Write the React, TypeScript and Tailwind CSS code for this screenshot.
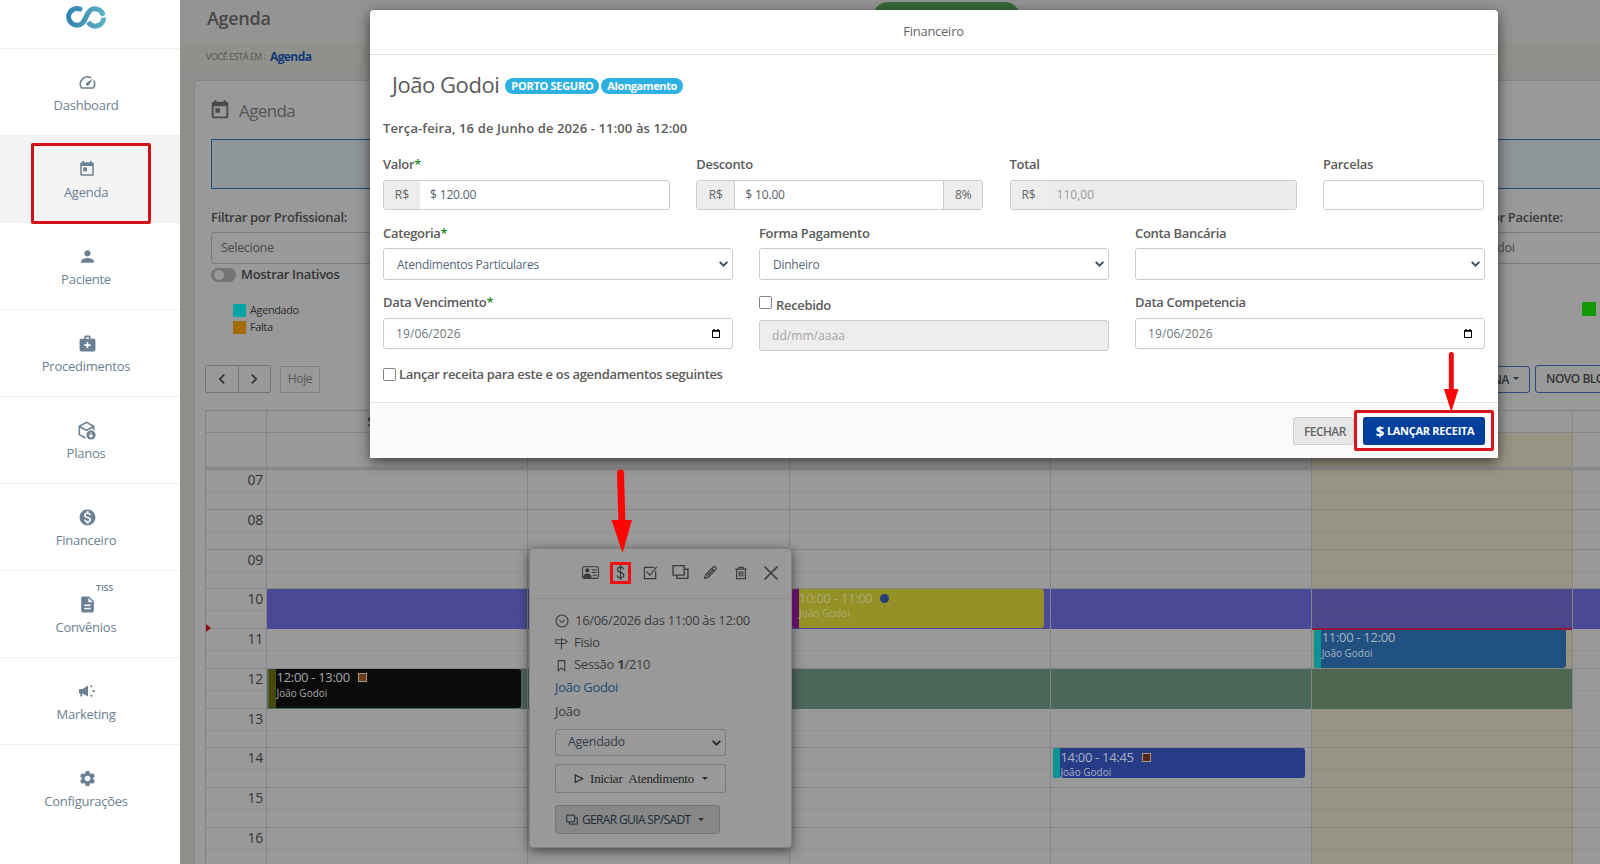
import type { ReactNode } from "react";
import {
  MdSpeed,
  MdToday,
  MdPerson,
  MdMedicalServices,
  MdMonetizationOn,
  MdDescription,
  MdSettings,
} from "react-icons/md";
import { BsPersonVcard } from "react-icons/bs";

function Logo() {
  return (
    <svg width="42" height="24" viewBox="0 0 42 24" fill="none" className="block">
      <defs>
        <linearGradient id="logo" x1="0" y1="0" x2="42" y2="0" gradientUnits="userSpaceOnUse">
          <stop offset="0" stopColor="#2f7fae" />
          <stop offset="1" stopColor="#5fb4c6" />
        </linearGradient>
      </defs>
      <g stroke="url(#logo)" strokeWidth="5">
        <path
          d="M15 4.100A8.300 8.300 0 1 0 17.300 18.200C20.500 15.500 21.500 9 25 5.600A8.300 8.300 0 0 1 37.600 8.600"
          strokeLinecap="round"
        />
        <path d="M38.700 12.600A8.400 8.400 0 0 1 23.200 17.200" />
      </g>
    </svg>
  );
}

function BoxDownIcon() {
  return (
    <svg width="18" height="19" viewBox="0 0 18 19" fill="none" stroke="currentColor" strokeWidth="1.6">
      <path d="M7.500 17 1.300 13.600V5.300L8.500 1.300l7.200 4v4M1.500 5.500l7 3.900 7-3.900" />
      <circle cx="13" cy="14" r="4.600" fill="currentColor" stroke="none" />
      <path d="M13 11.400v4.600M11 14.200l2 2 2-2" stroke="#fff" strokeWidth="1.100" />
    </svg>
  );
}

function MegaphoneIcon() {
  return (
    <svg width="18" height="14" viewBox="0 0 18 14" fill="currentColor">
      <path d="M1 5h3.500L10 1.500v11L4.500 9.500H4.200v3H2.400v-3H1z" />
      <path d="M12 2.500l1.400-1.600 1.200 1L13.200 3.600zM14 6.200h3v1.500h-3zM12 11.500l1.200-1.100 1.400 1.700-1.200 1z" />
    </svg>
  );
}

function LineIcon({ children, size = 15 }: { children: ReactNode; size?: number }) {
  return (
    <svg width={size} height={size} viewBox="0 0 16 16" fill="none" stroke="currentColor" strokeWidth="1.300" className="shrink-0">
      {children}
    </svg>
  );
}

const layersPath = <path d="M1 1.500h10.500v9H1zM4.500 10.500v3H15V5h-3.500" />;

const menu = [
  { label: "Dashboard", icon: <MdSpeed size={19} /> },
  { label: "Agenda", icon: <MdToday size={18} />, active: true },
  { label: "Paciente", icon: <MdPerson size={19} /> },
  { label: "Procedimentos", icon: <MdMedicalServices size={19} /> },
  { label: "Planos", icon: <BoxDownIcon /> },
  { label: "Financeiro", icon: <MdMonetizationOn size={19} /> },
  { label: "Convênios", icon: <MdDescription size={19} />, tag: "TISS" },
  { label: "Marketing", icon: <MegaphoneIcon /> },
  { label: "Configurações", icon: <MdSettings size={19} /> },
];

function Sidebar() {
  return (
    <aside className="w-[180px] shrink-0 bg-white text-[#6b8193]">
      <div className="h-[48px] pt-[5px] pl-[65px]">
        <Logo />
      </div>
      {menu.map((item) => (
        <div
          key={item.label}
          className={
            "relative flex h-[87px] flex-col items-center border-t border-[#f1f1f1] pr-[8px] pt-[23px] " +
            (item.active ? "bg-[#f4f4f4]" : "")
          }
        >
          <div className="flex h-5 items-center pl-[2px]">{item.icon}</div>
          <span className="mt-[3px] text-[13px] leading-[20px] tracking-[-0.250px]">{item.label}</span>
          {item.tag && (
            <span className="absolute left-[96px] top-[9px] text-[9px] font-semibold leading-[16px] tracking-[-0.200px]">
              {item.tag}
            </span>
          )}
          {item.active && (
            <div className="absolute left-[31px] top-[7px] z-10 h-[81px] w-[120px] rounded-[2px] border-[3px] border-[#d01217]" />
          )}
        </div>
      ))}
    </aside>
  );
}

type CalEvent = {
  title: string;
  box: string;
  bar: string;
  text: string;
  mark?: string;
};

const events: Record<string, CalEvent> = {
  "10-2": {
    title: "10:00 - 11:00",
    box: "h-[39px] bg-[#949226]",
    bar: "bg-[#5f1263]",
    text: "text-[#aeab7c]",
    mark: "size-[9px] rounded-full bg-[#263f78]",
  },
  "11-4": { title: "11:00 - 12:00", box: "h-[39px] bg-[#205181]", bar: "bg-[#0b9493]", text: "text-[#a9b4bf]" },
  "12-0": {
    title: "12:00 - 13:00",
    box: "h-[39px] bg-[#0b0b0b]",
    bar: "bg-[#48480a]",
    text: "text-[#a8a8a8]",
    mark: "size-[9px] border border-[#a89884] bg-[#6b3a14]",
  },
  "14-3": {
    title: "14:00 - 14:45",
    box: "h-[30px] bg-[#273c86]",
    bar: "bg-[#0b9493]",
    text: "text-[#aab0c0]",
    mark: "size-[9px] border border-[#a89884] bg-[#552712]",
  },
};

const hours = ["07", "08", "09", "10", "11", "12", "13", "14", "15", "16"];
const days = ["Seg 15/06", "Ter 16/06", "Qua 17/06", "Qui 18/06", "Sex 19/06", "Sáb 20/06"];

function EventCard({ event }: { event: CalEvent }) {
  return (
    <div className={"absolute left-[2px] top-0 z-10 flex w-[252px] overflow-hidden rounded-[3px] " + event.box}>
      <div className={"w-[7px] shrink-0 " + event.bar} />
      <div className={"pl-[0.500px] " + event.text}>
        <div className="flex h-[18px] items-center text-[13px] tracking-[-0.300px]">
          {event.title}
          {event.mark && <span className={"ml-[8px] " + event.mark} />}
        </div>
        <div className="text-[10px] leading-[13px]">João Godoi</div>
      </div>
    </div>
  );
}

function cellColor(hour: string, day: number) {
  if (hour === "10") return day === 4 ? "bg-[#4c478b]" : "bg-[#4b4a97]";
  if (hour === "12" && day < 5) return day === 4 ? "bg-[#4d6750]" : "bg-[#4d675b]";
  return day === 4 ? "bg-[#979484]" : "";
}

function Calendar() {
  return (
    <div className="mt-[17px] w-[1631px] border-l border-t border-[#828282]">
      <div className="flex h-[22px] border-b border-[#858585] text-[13px] font-semibold text-[#333]">
        <div className="w-[61px] shrink-0 border-r border-[#858585]" />
        {days.map((d) => (
          <div key={d} className="w-[261.300px] shrink-0 border-r border-[#858585] text-center leading-[21px]">
            {d}
          </div>
        ))}
      </div>
      <div className="flex h-[34px]">
        <div className="w-[61px] shrink-0 border-r border-[#858585]" />
        {days.map((d, i) => (
          <div
            key={d}
            className={"w-[261.300px] shrink-0 border-r border-[#858585] " + (i === 4 ? "bg-[#979484]" : "")}
          />
        ))}
      </div>
      <div className="h-[3px] border-y border-[#828282] bg-[#8e8e8e]" />
      {hours.map((h) => (
        <div key={h} className="flex h-[39.750px]">
          <div className="w-[61px] shrink-0 border-b border-r border-[#858585]">
            <div className="h-[22px] border-b border-[#8f8f8f] pr-[3px] text-right text-[14px] leading-[20px] tracking-[-0.200px] text-[#333]">
              {h}
            </div>
          </div>
          {days.map((d, i) => (
            <div
              key={d}
              className={
                "relative w-[261.300px] shrink-0 border-r border-[#858585] " +
                cellColor(h, i) +
                (h === "10" || h === "12" ? "" : " border-b")
              }
            >
              <div className="h-[22px] border-b border-black/5" />
              {h === "11" && i === 4 && <div className="absolute inset-x-0 -top-px z-20 h-[1.500px] bg-[#8e1a3a]" />}
              {events[`${h}-${i}`] && <EventCard event={events[`${h}-${i}`]} />}
            </div>
          ))}
        </div>
      ))}
    </div>
  );
}

function AgendaPage() {
  return (
    <main className="relative h-full min-w-0 flex-1 overflow-hidden bg-[#8f8f8c]">
      <header className="flex h-[44px] items-start bg-[#949494] pl-[27px] pt-[5px] text-[18px] font-semibold leading-[26px] tracking-[-0.300px] text-[#474747]">
        Agenda
      </header>
      <div className="flex h-[25px] items-center bg-[#91918b] pl-[26px]">
        <span className="w-[64px] text-[9px] tracking-[-0.450px] text-[#555]">VOCÊ ESTÁ EM :</span>
        <span className="text-[12px] font-bold tracking-[-0.600px] text-[#0e3a78]">Agenda</span>
      </div>
      <div className="h-[11px] bg-[#8e8e8f]" />
      <div className="ml-[14px] h-[784px] w-[1660px] rounded-tl-[4px] border-l border-t border-[#858585] bg-[#999]">
        <div className="flex h-[58px] items-center pl-[14px] text-[#4a4a4a]">
          <MdToday size={22} />
          <span className="ml-[8px] mt-[2px] text-[17px] tracking-[-0.600px] text-[#555]">Agenda</span>
        </div>
        <div className="ml-[16px] h-[50px] border border-[#24477f] bg-[#8e9598]" />
        <div className="ml-[16px] flex pt-[18px] text-[13px] tracking-[-0.300px] text-[#3a3a3a]">
          <div className="w-[1234px]">
            <div className="font-semibold leading-[20px]">Filtrar por Profissional:</div>
            <div className="mt-[5px] h-[32px] w-[1190px] rounded-[3px] border border-[#7b7b7b] pl-[9px] text-[12.500px] leading-[30px] text-[#4a4a4a]">
              Selecione
            </div>
          </div>
          <div className="w-[300px]">
            <div className="font-semibold leading-[20px]">Filtrar por Paciente:</div>
            <div className="mt-[5px] h-[32px] rounded-[3px] border border-[#7b7b7b] pl-[8px] text-[12.500px] leading-[30px] text-[#4a4a4a]">
              João Godoi
            </div>
          </div>
        </div>
        <div className="ml-[16px] mt-[3px] flex h-[15px] items-center">
          <span className="flex h-[14px] w-[25px] items-center rounded-full bg-[#747474] pl-[3px]">
            <span className="size-[10px] rounded-full bg-[#999]" />
          </span>
          <span className="ml-[5px] text-[13px] font-semibold tracking-[-0.300px] text-[#333]">Mostrar Inativos</span>
        </div>
        <div className="ml-[38px] mt-[20px] flex h-[63px] text-[11px] font-medium tracking-[-0.400px] text-[#2c2c2c]">
          <div className="w-[1349px]">
            <div className="flex h-[17px] items-center">
              <span className="mr-[4px] size-[13px] bg-[#06a5a5]" />
              Agendado
            </div>
            <div className="flex h-[17px] items-center">
              <span className="mr-[4px] size-[13px] bg-[#a36c0a]" />
              Falta
            </div>
          </div>
          <div className="size-[14px] bg-[#129a06]" />
        </div>
        <div className="ml-[10px] flex h-[28px] text-[#333]">
          <div className="flex w-[66px] rounded-[2px] border border-[#747474]">
            <div className="flex flex-1 items-center justify-center border-r border-[#747474]">
              <LineIcon size={14}>
                <path d="M10.500 3 5.500 8l5 5" strokeWidth="2" />
              </LineIcon>
            </div>
            <div className="flex flex-1 items-center justify-center">
              <LineIcon size={14}>
                <path d="M5.500 3l5 5-5 5" strokeWidth="2" />
              </LineIcon>
            </div>
          </div>
          <div className="ml-[9px] mt-px h-[27px] w-[40px] border border-[#808080] text-center text-[12px] leading-[24px] tracking-[-0.300px] text-[#555]">
            Hoje
          </div>
          <div className="ml-[1130px] mt-px flex h-[27px] w-[80px] items-center justify-end rounded-[3px] border border-[#2d4a7c] pr-[10px] text-[12px] font-semibold tracking-[-0.400px]">
            SEMANA
            <span className="mb-[2px] ml-[4px] border-x-[3px] border-t-[3px] border-x-transparent border-t-[#333]" />
          </div>
          <div className="ml-[5px] flex h-[28px] w-[140px] items-center rounded-[3px] border border-[#2d4a7c] pl-[10px] text-[12px] font-semibold tracking-[-0.500px] whitespace-nowrap">
            NOVO BLOQUEIO
          </div>
        </div>
        <div className="pl-[10px]">
          <Calendar />
        </div>
      </div>
      {/* current time marker */}
      <div className="absolute left-[26px] top-[624px] border-y-[4px] border-l-[5px] border-y-transparent border-l-[#8c0a14]" />
      <div className="absolute left-[693px] top-[2px] h-[30px] w-[147px] rounded-full bg-[#356b38]" />
    </main>
  );
}

function Caret() {
  return <span className="border-x-[3px] border-t-[3px] border-x-transparent border-t-[#2b2b2b]" />;
}

function Chevron({ className }: { className: string }) {
  return (
    <svg width="9" height="6" viewBox="0 0 9 6" fill="none" stroke="currentColor" strokeWidth="2" className={className}>
      <path d="M.7.900 4.500 4.600 8.300.9" />
    </svg>
  );
}

function EventPopover() {
  return (
    <div className="absolute left-[529px] top-[548px] h-[300px] w-[263px] rounded-[4px] border border-[#808080] bg-[#999] text-[#3c3c3c] shadow-[0_3px_12px_rgba(0,0,0,0.55)]">
      <div className="flex h-[50px] items-center justify-end border-b border-[#8e8e8e] pr-[12px] pb-[2px]">
        <BsPersonVcard size={17} />
        <div className="ml-[11px] flex h-[22px] w-[21px] items-center justify-center border-[3px] border-[#f20d12]">
          <LineIcon size={15}>
            <path d="M11.500 4.500C11 3 10 2.300 8 2.300S4.800 3.300 4.800 5c0 4 6.700 1.800 6.700 6 0 1.700-1.600 2.700-3.500 2.700S4.500 12.800 4.500 11M8 0v16" />
          </LineIcon>
        </div>
        <div className="ml-[12px] flex items-center">
          <LineIcon>
            <path d="M13.500 6.500V14.500H1.500V2.500H12M4 7l3.500 4L14.500 2" />
          </LineIcon>
        </div>
        <div className="ml-[14px] flex items-center">
          <LineIcon size={17}>{layersPath}</LineIcon>
        </div>
        <div className="ml-[14px] flex items-center">
          <LineIcon>
            <path d="M1.500 14.500 3 10.300 10.800 2.200c1.800-1.600 4.300.9 2.700 2.700L5.600 13zM9.300 3.700l2.800 2.800M4.500 11.500 10.500 5.500" />
          </LineIcon>
        </div>
        <div className="ml-[16px] flex items-center">
          <LineIcon size={14}>
            <path d="M1.500 3.500h13M3 3.500v11h10v-11M5.500 3.500v-2h5v2M6 6v6M8 6v6M10 6v6" />
          </LineIcon>
        </div>
        <div className="ml-[15px] flex items-center">
          <LineIcon size={16}>
            <path d="m1.500 1.500 13 13M14.500 1.500l-13 13" strokeWidth="1.600" />
          </LineIcon>
        </div>
      </div>
      <div className="pl-[25px] pt-[11px] text-[13px] tracking-[-0.300px]">
        <div className="flex h-[22px] items-center">
          <LineIcon size={14}>
            <circle cx="8" cy="8" r="6.800" />
            <path d="m4.800 6.800 3.200 3 3.200-3" />
          </LineIcon>
          <span className="ml-[6px]">16/06/2026 das 11:00 às 12:00</span>
        </div>
        <div className="flex h-[22px] items-center">
          <LineIcon size={13}>
            <path d="M8 1v14M1 3.500h11.500L15 5.700 12.500 8H1z" />
          </LineIcon>
          <span className="ml-[6px]">Fisio</span>
        </div>
        <div className="flex h-[22px] items-center">
          <LineIcon size={13}>
            <path d="M4 2h8v12.500l-4-3.500-4 3.500z" />
          </LineIcon>
          <span className="ml-[6px]">
            Sessão <b>1</b>/210
          </span>
        </div>
        <div className="leading-[22px] text-[#234b70]">João Godoi</div>
        <div className="mt-[2px] leading-[22px]">João</div>
        <div className="mt-[7px] flex h-[27px] w-[171px] items-center justify-between rounded-[3px] border border-[#7b7b7b] pl-[12px] pr-[4px] text-[12.500px] text-[#34404a]">
          Agendado
          <Chevron className="text-[#2b2b2b]" />
        </div>
        <div className="mt-[8px] flex h-[29px] w-[171px] items-center rounded-[3px] border border-[#7b7b7b] pl-[18px] font-['Liberation_Serif',serif] text-[#222]">
          <LineIcon size={10}>
            <path d="M2 1.500 14 7.500 2 13.500z" strokeWidth="1.700" />
          </LineIcon>
          <span className="ml-[6px] mr-[8px] text-[13px] tracking-[-0.200px] [word-spacing:3.500px]">Iniciar Atendimento</span>
          <Caret />
        </div>
        <div className="mt-[12px] flex h-[29px] w-[165px] items-center rounded-[3px] border border-[#767676] bg-[#878787] pl-[10px] text-[12px] font-medium text-[#222c33]">
          <LineIcon size={12}>{layersPath}</LineIcon>
          <span className="ml-[4px] mr-[8px] whitespace-nowrap tracking-[-0.650px]">GERAR GUIA SP/SADT</span>
          <Caret />
        </div>
      </div>
    </div>
  );
}

function Label({ children, required }: { children: ReactNode; required?: boolean }) {
  return (
    <div className="h-[20px] text-[13px] font-semibold leading-[20px] tracking-[-0.320px] text-[#5a5a5a]">
      {children}
      {required && <span className="text-[#1d8a1d]">*</span>}
    </div>
  );
}

function MoneyInput({ value, suffix, disabled }: { value: string; suffix?: string; disabled?: boolean }) {
  return (
    <div className="mt-[6px] flex h-[30px] overflow-hidden rounded-[3px] border border-[#ccc] text-[12px] leading-[28px]">
      <div className={"shrink-0 bg-[#ededed] text-center text-[#666] " + (suffix ? "w-[38px] border-r border-[#ccc]" : "w-[36px]")}>
        R$
      </div>
      <div
        className={
          "flex-1 " +
          (suffix ? "pl-[10px] " : "pl-[10px] ") +
          (disabled ? "bg-[#ececec] text-[#9a9a9a]" : "tracking-[-0.150px] text-[#55606b]")
        }
      >
        {value}
      </div>
      {suffix && <div className="w-[39px] border-l border-[#ccc] bg-[#ededed] text-center text-[#666]">{suffix}</div>}
    </div>
  );
}

function SelectBox({ value }: { value?: string }) {
  return (
    <div className="mt-[5px] flex h-[32px] items-center justify-between rounded-[3px] border border-[#ccc] pl-[13px] pr-[4px] text-[12px] tracking-[-0.250px] text-[#55677a]">
      <span className="pt-px">{value}</span>
      <Chevron className="text-[#3c4e5e]" />
    </div>
  );
}

function DateBox({ value, disabled }: { value: string; disabled?: boolean }) {
  return (
    <div
      className={
        "flex h-[31px] items-center justify-between rounded-[3px] border border-[#ccc] pl-[12px] pr-[12px] text-[12px] " +
        (disabled ? "bg-[#eeecec] text-[#a5a5a5] tracking-[0.050px]" : "text-[#6d7780] tracking-[0.100px]")
      }
    >
      {value}
      {!disabled && (
        <svg width="8" height="9" viewBox="0 0 8 9" className="text-black" fill="none" stroke="currentColor">
          <path d="M.5 1.500h7v7h-7z" />
          <path d="M.5 2h7M2 0v1.500M6 0v1.500" strokeWidth="1.400" />
        </svg>
      )}
    </div>
  );
}

function Checkbox() {
  return <span className="size-[13px] shrink-0 rounded-[2px] border border-[#858585] bg-white" />;
}

function FinanceModal() {
  return (
    <div className="absolute left-[370px] top-[10px] flex h-[448px] w-[1128px] flex-col overflow-hidden rounded-t-[4px] bg-white">
      <div className="h-[40px] shrink-0 border-b border-[#f4f4f4] pr-px text-center text-[13px] leading-[43px] tracking-[-0.250px] text-[#666]">
        Financeiro
      </div>
      <div className="h-[5px] shrink-0 border-b border-[#e2e2e2]" />
      <div className="flex-1 px-[13px]">
        <div className="flex h-[58px] items-center pl-[9px]">
          <h2 className="text-[22px] tracking-[-0.450px] text-[#5a5a5a]">João Godoi</h2>
          <span className="ml-[6px] mt-[4px] h-[16px] rounded-full bg-[#2db1e1] px-[6px] text-[11px] font-bold leading-[15px] tracking-[-0.280px] text-white">
            PORTO SEGURO
          </span>
          <span className="ml-[2px] mt-[4px] h-[16px] rounded-full bg-[#2db1e1] px-[6px] text-[11px] font-bold leading-[15px] tracking-[-0.400px] text-white">
            Alongamento
          </span>
        </div>
        <div className="mt-[5px] text-[13px] font-semibold leading-[20px] tracking-[0.120px] text-[#5a5a5a]">
          Terça-feira, 16 de Junho de 2026 - 11:00 às 12:00
        </div>
        <div className="mt-[16px] grid grid-cols-[287px_287px_287px_161px] gap-x-[26.300px]">
          <div>
            <Label required>Valor</Label>
            <MoneyInput value="$ 120.00" />
          </div>
          <div>
            <Label>Desconto</Label>
            <MoneyInput value="$ 10.00" suffix="8%" />
          </div>
          <div>
            <Label>Total</Label>
            <MoneyInput value="110,00" disabled />
          </div>
          <div>
            <Label>Parcelas</Label>
            <div className="mt-[6px] h-[30px] rounded-[3px] border border-[#ccc]" />
          </div>
        </div>
        <div className="mt-[13px] grid grid-cols-3 gap-x-[26px]">
          <div>
            <Label required>Categoria</Label>
            <SelectBox value="Atendimentos Particulares" />
          </div>
          <div>
            <Label>Forma Pagamento</Label>
            <SelectBox value="Dinheiro" />
          </div>
          <div>
            <Label>Conta Bancária</Label>
            <SelectBox />
          </div>
        </div>
        <div className="mt-[12px] grid grid-cols-3 gap-x-[26px]">
          <div>
            <Label required>Data Vencimento</Label>
            <div className="h-[6px]" />
            <DateBox value="19/06/2026" />
          </div>
          <div>
            <div className="flex h-[28px] gap-[4px] pt-[4px]">
              <Checkbox />
              <div className="-mt-[1px]">
                <Label>Recebido</Label>
              </div>
            </div>
            <DateBox value="dd/mm/aaaa" disabled />
          </div>
          <div>
            <Label>Data Competencia</Label>
            <div className="h-[6px]" />
            <DateBox value="19/06/2026" />
          </div>
        </div>
        <div className="mt-[13px] flex items-center gap-[3px]">
          <Checkbox />
          <Label>Lançar receita para este e os agendamentos seguintes</Label>
        </div>
      </div>
      <div className="relative flex h-[56px] shrink-0 items-center justify-end border-t border-[#e2e2e2] bg-[#fafafa] pr-[13px]">
        <div className="h-[28px] w-[61px] rounded-[3px] border border-[#cfcfcf] bg-[#e6e6e6] pl-[10px] text-[12px] font-semibold leading-[27px] tracking-[-0.600px] text-[#666]">
          FECHAR
        </div>
        <div className="ml-[9px] flex h-[28px] w-[122px] items-center justify-center rounded-[3px] bg-[#003f9c] pl-[2px] pt-px text-[11px] font-bold tracking-[-0.300px] text-white">
          <span className="mr-[3px] text-[15px]">$</span>
          LANÇAR RECEITA
        </div>
        <div className="absolute left-[984px] top-[7px] h-[41px] w-[140px] rounded-[2px] border-[3px] border-[#d8141c]" />
      </div>
    </div>
  );
}

export default function App() {
  return (
    <div className="relative flex h-[864px] w-[1600px] overflow-hidden font-['Open_Sans',sans-serif]">
      <Sidebar />
      <AgendaPage />
      <EventPopover />
      <div className="absolute left-[370px] top-[10px] h-[448px] w-[1128px] rounded-[4px] shadow-[0_4px_14px_rgba(0,0,0,0.600)]" />
      <FinanceModal />
      {/* callout arrows */}
      <svg className="absolute left-[608px] top-[466px]" width="28" height="90" viewBox="0 0 28 90">
        <path d="M12.500 7 14 58" stroke="#fb0505" strokeWidth="7" strokeLinecap="round" />
        <path d="M3.500 54h20.500L14.500 87z" fill="#fb0505" />
      </svg>
      <svg className="absolute left-[1440px] top-[350px]" width="22" height="64" viewBox="0 0 22 64">
        <path d="M11.300 4.500V44" stroke="#ee0b10" strokeWidth="5" strokeLinecap="round" />
        <path d="M4 39h14.500L11.300 62z" fill="#fb0505" />
      </svg>
    </div>
  );
}
